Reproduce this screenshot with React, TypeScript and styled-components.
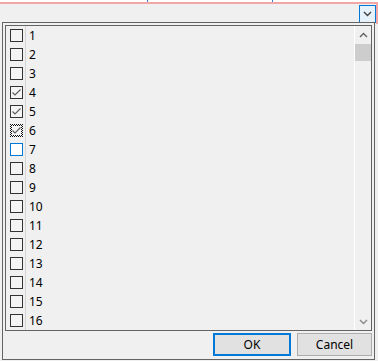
import styled, { createGlobalStyle, css } from 'styled-components';

const GlobalStyle = createGlobalStyle`
  html, body {
    margin: 0;
    padding: 0;
    background: #f0f0f0;
  }
  body {
    font-family: "Noto Sans", "Liberation Sans", sans-serif;
    font-size: 12px;
    color: #000000;
  }
`;

const Screen = styled.div`
  position: relative;
  width: 378px;
  height: 361px;
  overflow: hidden;
  background: #f0f0f0;
`;

const TopStrip = styled.div`
  display: flex;
  height: 2px;
  padding-left: 147px;
  gap: 124px;
  background: #ffffff;
`;

const Tick = styled.span`
  width: 1px;
  height: 2px;
  background: #3c7fd0;
`;

const ComboBox = styled.div`
  display: flex;
  justify-content: flex-end;
  align-items: flex-start;
  box-sizing: border-box;
  height: 22px;
  padding-top: 1px;
  border-top: 2px solid #f2a7a7;
  border-right: 2px solid #f2a7a7;
`;

const DropButton = styled.div`
  display: flex;
  align-items: center;
  justify-content: center;
  box-sizing: border-box;
  width: 17px;
  height: 18px;
  border: 1px solid #0078d7;
  background: #e5f1fb;
`;

// the open drop-down lies over the combo box
const Popup = styled.div`
  position: absolute;
  left: 2px;
  top: 22px;
  box-sizing: border-box;
  width: 373px;
  height: 338px;
  padding: 2px;
  border: 1px solid #646464;
  background: #f0f0f0;
  display: flex;
  flex-direction: column;
  gap: 2px;
`;

const List = styled.div`
  display: flex;
  box-sizing: border-box;
  height: 306px;
  border: 1px solid #646464;
  background: #f0f0f0;
`;

const Rows = styled.div`
  flex: 1;
  display: flex;
  flex-direction: column;
`;

const Row = styled.div`
  display: flex;
  align-items: center;
  height: 19px;
`;

const CheckCell = styled.div`
  display: flex;
  align-items: center;
  box-sizing: border-box;
  width: 20px;
  height: 100%;
  padding-left: 4px;
  border-right: 1px solid #d4d4d4;
`;

type BoxState = 'normal' | 'hover' | 'focus';

const Box = styled.div<{ $state: BoxState }>`
  position: relative;
  display: flex;
  align-items: center;
  justify-content: center;
  box-sizing: border-box;
  width: 13px;
  height: 13px;
  border: 1px solid #333333;
  background: #f4f4f4;
  ${(p) =>
    p.$state === 'hover' &&
    css`
      border-color: #0078d7;
      background: #ffffff;
    `}
  ${(p) =>
    p.$state === 'focus' &&
    css`
      border: 1px dotted #111111;
      box-shadow: inset 0 0 0 1px #f4f4f4;
      outline: 1px dotted #111111;
      outline-offset: -2px;
    `}
`;

const Label = styled.span`
  padding-left: 3px;
  line-height: 19px;
`;

const ScrollBar = styled.div`
  display: flex;
  flex-direction: column;
  box-sizing: border-box;
  width: 17px;
  border-left: 1px solid #ffffff;
  background: #f0f0f0;
`;

const ArrowButton = styled.div`
  display: flex;
  align-items: center;
  justify-content: center;
  height: 17px;
`;

const Track = styled.div`
  flex: 1;
  padding-top: 1px;
`;

const Thumb = styled.div`
  height: 17px;
  background: #cdcdcd;
`;

const ButtonRow = styled.div`
  display: flex;
  justify-content: flex-end;
  gap: 6px;
`;

const Button = styled.div<{ $default?: boolean }>`
  display: flex;
  align-items: center;
  justify-content: center;
  box-sizing: border-box;
  width: ${(p) => (p.$default ? '78px' : '75px')};
  height: 23px;
  background: #e1e1e1;
  border: ${(p) => (p.$default ? '2px solid #0078d7' : '1px solid #adadad')};
  font-size: 12px;
`;

const Check = () => (
  <svg width="9" height="9" viewBox="0 0 9 9" style={{ position: 'relative', zIndex: 1 }}>
    <polyline points="0.5,4.5 3,7 8.5,1.5" fill="none" stroke="#5a5a5a" strokeWidth="1.1" />
  </svg>
);

const Chevron = ({ up, color }: { up?: boolean; color: string }) => (
  <svg width="9" height="6" viewBox="0 0 9 6">
    <polyline
      points={up ? '1,5 4.5,1.5 8,5' : '1,1 4.5,4.5 8,1'}
      fill="none"
      stroke={color}
      strokeWidth="1.4"
    />
  </svg>
);

const items = Array.from({ length: 16 }, (_, i) => i + 1);
const checked = [4, 5, 6];

const stateOf = (n: number): BoxState => (n === 6 ? 'focus' : n === 7 ? 'hover' : 'normal');

export default function App() {
  return (
    <>
      <GlobalStyle />
      <Screen>
        <TopStrip>
          <Tick />
          <Tick />
        </TopStrip>
        <ComboBox>
          <DropButton>
            <Chevron color="#404040" />
          </DropButton>
        </ComboBox>
        <Popup>
          <List>
            <Rows>
              {items.map((n) => (
                <Row key={n}>
                  <CheckCell>
                    <Box $state={stateOf(n)}>{checked.includes(n) && <Check />}</Box>
                  </CheckCell>
                  <Label>{n}</Label>
                </Row>
              ))}
            </Rows>
            <ScrollBar>
              <ArrowButton>
                <Chevron up color="#606060" />
              </ArrowButton>
              <Track>
                <Thumb />
              </Track>
              <ArrowButton>
                <Chevron color="#8a8a8a" />
              </ArrowButton>
            </ScrollBar>
          </List>
          <ButtonRow>
            <Button $default>OK</Button>
            <Button>Cancel</Button>
          </ButtonRow>
        </Popup>
      </Screen>
    </>
  );
}
